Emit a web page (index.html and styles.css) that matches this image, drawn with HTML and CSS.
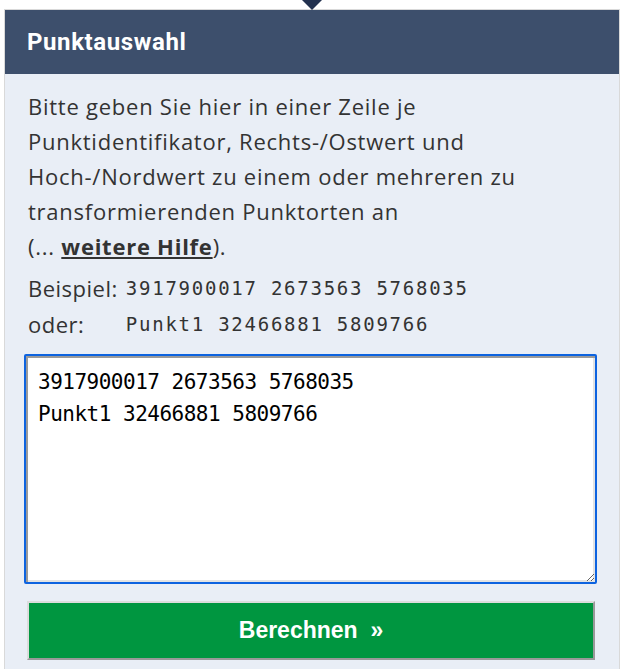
FILE: index.html
```html
<!DOCTYPE html>
<html lang="de">
<head>
  <meta charset="UTF-8">
  <meta name="viewport" content="width=device-width, initial-scale=1.0">
  <title>Punktauswahl</title>
  <link rel="stylesheet" href="styles.css">
</head>
<body>
  <div class="page">
    <div class="panel">
      <div class="panel-head">Punktauswahl</div>
      <div class="panel-body">
        <p class="intro">Bitte geben Sie hier in einer Zeile je Punktidentifikator, Rechts-/Ostwert und Hoch-/Nordwert zu einem oder mehreren zu transformierenden Punktorten an<br>(... <a href="#">weitere Hilfe</a>).</p>
        <div class="examples">
          <span class="ex-label">Beispiel:</span>
          <code>3917900017 2673563 5768035</code>
          <span class="ex-label">oder:</span>
          <code>Punkt1 32466881 5809766</code>
        </div>
        <textarea class="points" id="points" spellcheck="false">3917900017 2673563 5768035
Punkt1 32466881 5809766</textarea>
        <button type="button" class="calc">Berechnen&nbsp; »</button>
      </div>
    </div>
  </div>
</body>
</html>
```

FILE: styles.css
```css
body {
  margin: 0;
  padding: 0;
  background: #fff;
  font-family: "Open Sans", Arial, sans-serif;
  color: #333;
}
.page {
  padding: 9px 5px 0 4px;
}
.panel {
  position: relative;
  border: 1px solid #d9d9d9;
  border-bottom: none;
  background: #e9eef6;
}
.panel::before {
  content: "";
  position: absolute;
  left: 297px;
  top: -10px;
  border-left: 10px solid transparent;
  border-right: 10px solid transparent;
  border-top: 10px solid #22314f;
}
.panel-head {
  background-color: #3d4f6c;
  color: #fff;
  font-family: Roboto, Arial, sans-serif;
  font-weight: bold;
  font-size: 24px;
  letter-spacing: 0.6px;
  height: 64px;
  line-height: 64px;
  padding-left: 22px;
}
.panel-body {
  padding: 15px 21px 9px 19px;
}
.intro {
  margin: 0 0 0 4px;
  font-size: 22px;
  letter-spacing: 0.75px;
  line-height: 35px;
}
.intro a {
  color: #333;
  font-weight: bold;
}
.examples {
  display: grid;
  grid-template-columns: auto 1fr;
  column-gap: 8px;
  margin: 6px 0 12px 4px;
  font-size: 22px;
  letter-spacing: 0.5px;
  line-height: 36px;
}
.examples code {
  font-family: "DejaVu Sans Mono", monospace;
  font-size: 19px;
  letter-spacing: 1.75px;
  color: #333;
}
.points {
  display: block;
  box-sizing: border-box;
  width: 573px;
  height: 230px;
  margin: 0;
  padding: 10px 12px;
  border: 2px solid #0d63e0;
  border-radius: 2px;
  box-shadow: inset 2px 2px 0 #9a9a9a, inset -2px -2px 0 #e3e3e3;
  outline: none;
  background: #fff;
  color: #000;
  font-family: "DejaVu Sans Mono", monospace;
  font-size: 21px;
  letter-spacing: -0.5px;
  line-height: 32px;
}
.calc {
  display: block;
  box-sizing: border-box;
  width: 568px;
  height: 59px;
  margin: 17px 0 0 3px;
  border: 2px solid;
  border-color: #dcdcdc #999 #999 #dcdcdc;
  background-color: #009640;
  color: #fff;
  font-family: "Liberation Sans", Arial, sans-serif;
  font-weight: bold;
  font-size: 23px;
  cursor: pointer;
}
```
